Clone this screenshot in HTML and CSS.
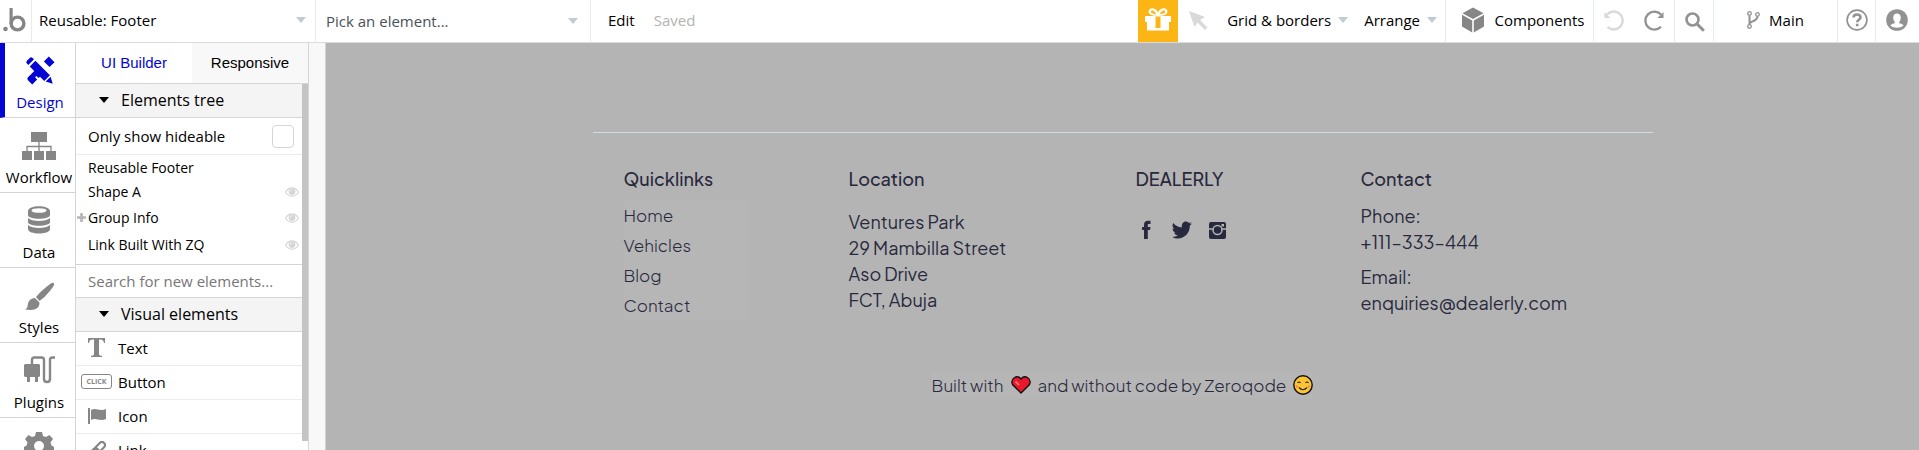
FILE: index.html
```html
<!DOCTYPE html>
<html lang="en">
<head>
<meta charset="utf-8">
<title>Reusable: Footer</title>
<link rel="stylesheet" href="styles.css">
</head>
<body>
<svg class="defs" aria-hidden="true">
  <symbol id="eye" viewBox="0 0 14 10"><path d="M.5 5C2.500 1.800 4.500.8 7 .8s4.500 1 6.500 4.200C11.500 8.200 9.500 9.200 7 9.200S2.500 8.200.5 5z" fill="none" stroke="#d6d6d6" stroke-width="1.200"/><circle cx="7" cy="4.600" r="3.400" fill="#d6d6d6"/><path d="M5.300 4.400A1.700 1.700 0 0 1 7 2.700" fill="none" stroke="#fff" stroke-width=".7"/></symbol>
</svg>

<header class="topbar">
  <a class="logo" href="#" aria-label="Bubble"><svg width="23" height="25" viewBox="0 0 23 25"><circle cx="2.500" cy="22" r="2.300" fill="#868686"/><circle cx="14.500" cy="16.500" r="6.400" fill="none" stroke="#868686" stroke-width="3.400"/><path d="M8.100 1v16" stroke="#868686" stroke-width="3.200"/></svg></a>
  <button class="picker picker-page">Reusable: Footer<i class="caret"></i></button>
  <button class="picker picker-element">Pick an element...<i class="caret"></i></button>
  <button class="edit">Edit</button>
  <span class="saved">Saved</span>
  <div class="tools">
    <button class="gift" aria-label="Gift"><svg width="28" height="24" viewBox="0 0 28 24"><path d="M1 8h26v6h-2v8.500H3V14H1z" fill="#fff"/><path d="M14 7C6 7 5 4.500 6 2.500S11.500.5 14 7zm0 0c8 0 9-2.500 8-4.500S16.500.5 14 7z" fill="none" stroke="#fff" stroke-width="2.200"/><path d="M11.500 8.500h5V20h-5z" fill="#fbb616"/></svg></button>
    <button class="arrow" aria-label="Pointer"><svg width="20" height="20" viewBox="0 0 20 20"><path d="M1 1l16 6-5 3 7.500 7.500-2.500 2.500L9.500 12.500 6.500 17z" fill="#d9d9d9"/></svg></button>
    <button class="menu grid-menu">Grid &amp; borders<i class="caret"></i></button>
    <button class="menu arrange-menu">Arrange<i class="caret"></i></button>
    <button class="tool components"><svg width="24" height="26" viewBox="0 0 24 26"><path d="M12 .5l10.500 5.700L12 12 1.500 6.200zM1 7.800l10.200 5.600v12L1 19.600zM23 7.800l-10.200 5.600v12L23 19.600z" fill="#868686"/></svg>Components</button>
    <div class="tool history">
      <button aria-label="Undo"><svg width="20" height="21" viewBox="0 0 20 21"><path d="M3 4.500A9 9 0 1 1 3.500 17" fill="none" stroke="#d9d9d9" stroke-width="2.400"/><path d="M.5 2v6h6z" fill="#d9d9d9"/></svg></button>
      <button aria-label="Redo"><svg width="20" height="21" viewBox="0 0 20 21"><path d="M17 4.500A9 9 0 1 0 17 16.800" fill="none" stroke="#929292" stroke-width="2.400"/><path d="M19.500 2v6h-6z" fill="#929292"/></svg></button>
    </div>
    <button class="tool search" aria-label="Search"><svg width="20" height="20" viewBox="0 0 20 20"><circle cx="7.500" cy="7.500" r="6" fill="none" stroke="#929292" stroke-width="2.600"/><path d="M11.800 11.800l7 7" stroke="#929292" stroke-width="3"/></svg></button>
    <button class="tool branch"><svg width="13" height="18" viewBox="0 0 13 18"><g fill="none" stroke="#929292" stroke-width="1.300"><circle cx="2.500" cy="2.500" r="1.800"/><circle cx="2.500" cy="15.500" r="1.800"/><circle cx="10.500" cy="3.500" r="1.800"/><path d="M2.500 4.500v9c0-4 7-2 8-8" stroke-width="2"/></g></svg>Main</button>
    <button class="tool help" aria-label="Help"><svg width="22" height="22" viewBox="0 0 22 22"><circle cx="11" cy="11" r="9.900" fill="none" stroke="#929292" stroke-width="1.700"/><path d="M7.500 8.500c.2-4 7-4 7-.2 0 2.700-3.300 2.300-3.300 5M11.200 14.700v2.500" fill="none" stroke="#929292" stroke-width="2.600"/></svg></button>
    <button class="tool account" aria-label="Account"><svg width="22" height="22" viewBox="0 0 22 22"><circle cx="11" cy="11" r="10.800" fill="#929292"/><path d="M7.200 8.500c0-5.500 7.600-5.500 7.600 0 0 2.200-.8 3.800-1.800 4.700 0 1.500 4 1.500 4.500 3.300-3 3-10 3-13 0 .5-1.800 4.500-1.800 4.500-3.300-1-.9-1.800-2.500-1.800-4.700z" fill="#fff"/></svg></button>
  </div>
</header>

<div class="workspace">
  <nav class="rail">
    <a class="rail-item active" href="#"><svg width="30" height="30" viewBox="0 0 30 30"><g transform="rotate(45 15 15)"><path d="M11 -1.500h8v7h-8zM11 24v4a2 2 0 0 0 2 2h6v-7h-3v-2h3v-3h-8z"/></g><g transform="rotate(-45 15 15)"><path d="M11 2.500v-2a2 2 0 0 1 2-2h4a2 2 0 0 1 2 2v2zM11 4.500h8V25h-8zM11.500 26.500h7L15 33z"/></g></svg>Design</a>
    <a class="rail-item" href="#"><svg width="34" height="30" viewBox="0 0 34 30"><path d="M9 1h16v10H9zM0 20h10v9H0zM12 20h10v9H12zM24 20h10v9H24z"/><path d="M17 11v9M5 20v-4.500h24V20" fill="none" stroke="#868686" stroke-width="1.300"/></svg>Workflow</a>
    <a class="rail-item" href="#"><svg width="22" height="28" viewBox="0 0 22 28"><path d="M0 5c0-6.500 22-6.500 22 0v4c0 5-22 5-22 0zM0 12c4 4 18 4 22 0v4c0 5-22 5-22 0zM0 19c4 4 18 4 22 0v4c0 6-22 6-22 0z"/><ellipse cx="11" cy="4.500" rx="7.500" ry="2.300" fill="#fff"/></svg>Data</a>
    <a class="rail-item" href="#"><svg width="30" height="30" viewBox="0 0 30 30"><path d="M29.500 2c2 2-1 5-9 14l-5 4-3.500-4 4-4.500C23 5.500 28 .5 29.500 2zM11 17l4.500 4.500c0 6-4 8.500-14.500 7 3.500-2 2-4 3.500-7.500 1.500-3 4-4 6.500-4z"/></svg>Styles</a>
    <a class="rail-item" href="#"><svg width="31" height="28" viewBox="0 0 31 28"><path d="M0 9l1-1h14l1 1v11l-1 1h-1v5h-3v-5H6v5H3v-5H1l-1-1z"/><path d="M8 8V4q0-2.500 2.500-2.500h7Q20 1.500 20 4v19q0 3 3 3t3-3V4q0-2.500 2.500-2.500H31" fill="none" stroke="#868686" stroke-width="2.400"/></svg>Plugins</a>
    <a class="rail-item" href="#" aria-label="Settings"><svg width="30" height="30" viewBox="0 0 30 30"><path fill-rule="evenodd" d="M12 1h6l1 4 3 1 3.500-2L29 8l-2.500 3.500 1 3L30 16v4l-4 1-4 5-7 3-7-3-4-5-4-1v-4l2.500-1.500 1-3L1 8l3.500-4L8 6l3-1zM15 10a5 5 0 1 0 0 10 5 5 0 0 0 0-10z"/></svg></a>
  </nav>

  <aside class="panel">
    <div class="tabs"><button class="tab selected">UI Builder</button><button class="tab">Responsive</button></div>
    <div class="panel-scroll">
      <div class="panel-body">
        <button class="section"><i class="twisty"></i>Elements tree</button>
        <label class="hideable">Only show hideable<input type="checkbox"></label>
        <ul class="tree">
          <li>Reusable Footer</li>
          <li>Shape A<svg class="eye"><use href="#eye"/></svg></li>
          <li class="group"><svg class="plus" width="9" height="9" viewBox="0 0 9 9"><path d="M4.500 0v9M0 4.500h9" stroke="#b5b5b5" stroke-width="2.600"/></svg>Group Info<svg class="eye"><use href="#eye"/></svg></li>
          <li>Link Built With ZQ<svg class="eye"><use href="#eye"/></svg></li>
        </ul>
        <input class="element-search" type="search" aria-label="Search for new elements" placeholder="Search for new elements...">
        <button class="section"><i class="twisty"></i>Visual elements</button>
        <ul class="palette">
          <li><span class="glyph"><svg width="17" height="19" viewBox="0 0 17 19"><path d="M0 0h17v5h-1c-.5-2.800-1.500-3.500-5-3.500V16c0 1.200.8 1.700 3 1.800V19H3v-1.200c2.200-.1 3-.6 3-1.800V1.500C2.500 1.500 1.500 2.200 1 5H0z" fill="#868686"/></svg></span>Text</li>
          <li><span class="glyph"><b class="click">CLICK</b></span>Button</li>
          <li><span class="glyph"><svg width="18" height="16" viewBox="0 0 18 16"><path d="M0 0h2v16H0zM3 2c5-3 8 2 15-1v10c-7 3-10-2-15 1z" fill="#868686"/></svg></span>Icon</li>
          <li><span class="glyph"><svg width="18" height="18" viewBox="0 0 18 18"><g transform="rotate(-45 9 9)" fill="none" stroke="#868686" stroke-width="2.200"><rect x="-1" y="6" width="11" height="6" rx="3"/><rect x="8" y="6" width="11" height="6" rx="3"/></g></svg></span>Link</li>
        </ul>
      </div>
      <div class="scrollbar"></div>
    </div>
  </aside>
  <div class="gutter"></div>

  <main class="canvas">
    <footer class="footer">
      <div class="columns">
        <section class="quick">
          <h2>Quicklinks</h2>
          <nav class="links"><a href="#">Home</a><a href="#">Vehicles</a><a href="#">Blog</a><a href="#">Contact</a></nav>
        </section>
        <section class="location">
          <h2>Location</h2>
          <address>Ventures Park<br>29 Mambilla Street<br>Aso Drive<br>FCT, Abuja</address>
        </section>
        <section class="brand">
          <h2>DEALERLY</h2>
          <div class="social">
            <a href="#" aria-label="Facebook"><svg width="20" height="20" viewBox="0 0 20 20"><path d="M7 19v-9H5V7h2V5c0-3 1.500-4.200 4-4.200h2.500V4H12c-1 0-1.200.4-1.200 1.300V7h2.700l-.4 3h-2.300v9z"/></svg></a>
            <a href="#" aria-label="Twitter"><svg width="20" height="20" viewBox="0 0 20 20"><path d="M20 3.500l-2.200 2.200C18 13 12.500 18.500 6 18.500c-2.200 0-4-.5-5.600-1.500 2 0 4-.5 5.400-1.700-2-.2-3.200-1.200-3.700-2.800h1.700C1.800 12 .6 10.500.6 8.400l1.800.5C.5 7.500 0 5.200 1.200 3.100c2 2.500 5 4.100 8.600 4.300-.8-5 4-7.500 7-4.500l2.500-1-1.600 2.200z"/></svg></a>
            <a href="#" aria-label="Instagram"><svg width="20" height="20" viewBox="0 0 20 20"><rect x="2" y="2" width="17" height="17" rx="2"/><path d="M2 9h4.500M14.500 9H19" stroke="#b4b4b4" stroke-width="1.500"/><circle cx="10.500" cy="10" r="4.500" fill="none" stroke="#b4b4b4" stroke-width="1.500"/><path d="M14.500 4h2.500v2.500h-2.500z" fill="#b4b4b4"/></svg></a>
          </div>
        </section>
        <section class="contact">
          <h2>Contact</h2>
          <p>Phone:<br>+111–333–444</p>
          <p>Email:<br>enquiries@dealerly.com</p>
        </section>
      </div>
      <a class="built" href="#">Built with
        <svg width="20" height="18" viewBox="0 0 20 18" role="img" aria-label="love"><path d="M10 17L1.500 8.500C-1 3 6-2 10 3c4-5 11 0 8.500 5.500z" fill="#e8192c" stroke="#111" stroke-width="1.300"/><path d="M4.500 5.500L8 9" stroke="#f76b6b" stroke-width="1.800"/></svg>
        and without code by Zeroqode
        <svg width="20" height="20" viewBox="0 0 20 20" role="img" aria-label="smile"><circle cx="10" cy="10" r="9.200" fill="#fdc534" stroke="#111" stroke-width="1.400"/><path d="M4.500 8q1.500-2 3 0M12.500 8q1.500-2 3 0M6 12.500q4 4.500 8 0" fill="none" stroke="#222" stroke-width="1.200"/><circle cx="4" cy="11.500" r="1.300" fill="#f28b50"/><circle cx="16" cy="11.500" r="1.300" fill="#f28b50"/></svg></a>
    </footer>
  </main>
</div>
</body>
</html>
```
FILE: styles.css
```css
* { box-sizing: border-box; }
body {
  margin: 0;
  height: 100vh;
  overflow: hidden;
  display: flex;
  flex-direction: column;
  font: 15px/20px "Open Sans", sans-serif;
  color: #000;
  background: #fff;
}
button, input { font: inherit; color: inherit; }
button { border: 0; padding: 0; background: none; cursor: pointer; }
a { color: inherit; text-decoration: none; }
ul { list-style: none; margin: 0; padding: 0; }
svg { flex: none; }
.defs { display: none; }

.topbar { display: flex; flex: none; height: 43px; border-bottom: 1px solid #dadddd; }
.topbar button { display: flex; align-items: center; white-space: nowrap; padding-bottom: 2px; }
.logo { display: flex; align-items: center; justify-content: flex-end; width: 32px; padding: 0 5px 3px 0; border-right: 1px solid #e6ebeb; }
.caret { flex: none; border: 5px solid transparent; border-top: 6px solid #c0cbd2; border-bottom: 0; }
.topbar .picker { justify-content: space-between; padding: 0 9px 2px 7px; border-right: 1px solid #e6ebeb; }
.topbar .picker-page { width: 284px; }
.topbar .picker-element { width: 275px; padding: 0 12px 0 10px; color: #47525b; }
.edit { margin-left: 17px; }
.saved { margin-left: 19px; line-height: 40px; color: #b3b3b3; }
.tools { display: flex; margin-left: auto; }
.gift { width: 40px; justify-content: center; background: #fbb616; }
.arrow { margin-left: 10px; width: 22px; }
.menu { gap: 7px; }
.grid-menu { margin-left: 17px; }
.arrange-menu { margin: 0 8px 0 16px; }
.topbar .tool { justify-content: center; border-left: 1px solid #e6ebeb; }
.topbar .components { width: 148px; padding-left: 6px; gap: 10px; }
.history { display: flex; width: 81px; gap: 20px; }
.topbar .search { width: 39px; padding: 2px 0 0 2px; }
.branch { width: 124px; gap: 9px; }
.help { width: 38px; }
.topbar .account { width: 44px; padding-right: 2px; }

.workspace { display: flex; flex: 1; min-height: 0; }
.rail { width: 76px; flex: none; border-right: 1px solid #d5d5d5; overflow: hidden; }
.rail-item { display: flex; flex-direction: column; align-items: center; justify-content: space-between; height: 75px; padding: 13px 0 5px 3px; border-bottom: 1px solid #d5d5d5; }
.rail-item svg { fill: #868686; }
.rail-item.active { border-left: 5px solid #0205d3; color: #0205d3; padding-left: 0; }
.rail-item.active svg { fill: #0205d3; }

.panel { display: flex; flex-direction: column; flex: none; width: 233px; border-right: 1px solid #d5d5d5; }
.tabs { display: flex; flex: none; height: 41px; border-bottom: 1px solid #d5d5d5; }
.tab { flex: 1; background: #f8f8f8; font-family: "Liberation Sans", Arial, sans-serif; }
.tab.selected { background: #fff; color: #0205d3; }
.panel-scroll { display: flex; flex: 1; min-height: 0; overflow: hidden; }
.panel-body { flex: 1; }
.scrollbar { width: 6px; height: 357px; background: #c4c4c4; }
.section { display: flex; align-items: center; width: 100%; height: 34px; padding: 0 0 2px 23px; gap: 12px; background: #f4f4f4; border-bottom: 1px solid #d5d5d5; font-size: 16px; }
.twisty { border: 5px solid transparent; border-top: 6px solid #000; border-bottom: 0; }
.hideable { display: flex; align-items: center; justify-content: space-between; height: 37px; padding: 0 8px 0 12px; border-bottom: 1px solid #ececec; }
.hideable input { appearance: none; width: 22px; height: 23px; margin: 0; border: 1px solid #d5d5d5; border-radius: 4px; background: #fff; }
.tree { padding: 1px 3px 6px 12px; border-bottom: 1px solid #d5d5d5; font-size: 14px; }
.tree li { position: relative; display: flex; align-items: center; justify-content: space-between; height: 27px; }
.tree li:nth-child(-n+2) { height: 24px; }
.eye { width: 14px; height: 10px; }
.plus { position: absolute; left: -11px; }
.element-search { display: block; width: 100%; height: 33px; padding: 0 12px; border: 0; border-bottom: 1px solid #d5d5d5; outline: 0; }
.element-search::placeholder { color: #777; opacity: 1; }
.palette li { display: flex; align-items: center; height: 34px; padding: 0 0 2px 5px; gap: 6px; border-bottom: 1px solid #ececec; }
.glyph { display: flex; justify-content: center; width: 31px; }
.click { width: 31px; height: 15px; border: 1px solid #868686; border-radius: 3px; color: #868686; font: bold 7px/13px "Open Sans", sans-serif; text-align: center; }
.gutter { flex: none; width: 17px; background: #f8f8f8; border-right: 1px solid #d5d5d5; }

.canvas { flex: 1; min-width: 0; background: #b4b4b4; padding-top: 89px; color: #28293d; font: 18px/26px "Plus Jakarta Sans", Inter, sans-serif; }
.footer { display: flex; flex-direction: column; align-items: center; width: 1060px; max-width: 100%; margin: 0 auto; border-top: 1px solid #cfe1e8; }
.columns { display: grid; grid-template-columns: 225fr 287fr 225fr 292fr; width: 100%; padding: 33px 0 0 31px; }
h2 { margin: 0; font-size: 18px; line-height: 26px; font-weight: 500; }
.links { display: flex; flex-direction: column; width: 124px; margin-top: 8px; background: #b6b6b6; font-size: 17px; font-weight: 300; }
.links a { line-height: 30px; }
address { margin-top: 17px; font-style: normal; }
.social { display: flex; gap: 15px; margin-top: 28px; padding-left: 1px; }
.social svg { display: block; fill: #28293d; }
.contact p { margin: 0 0 9px; }
.contact h2 + p { margin-top: 11px; }
.built { display: flex; align-items: center; gap: 7px; margin-top: 47px; background: #b6b6b6; font-size: 17px; font-weight: 300; }
```
